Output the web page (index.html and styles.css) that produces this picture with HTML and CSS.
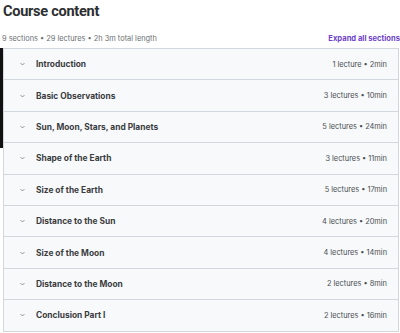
FILE: index.html
```html
<!DOCTYPE html>
<html>
<head>
    <meta charset="utf-8">
    <title>Course content</title>
    <link rel="stylesheet" href="styles.css">
</head>
<body>
    <h2 class="title">Course content</h2>
    <div class="summary">
        <span>9 sections • 29 lectures • 2h 3m total length</span>
        <button class="expand">Expand all sections</button>
    </div>

    <div class="popover"></div>

    <div class="sections">
        <div class="section">
            <svg class="chev" viewBox="0 0 10 6"><path d="M1 1l4 4 4-4"/></svg>
            <span class="name">Introduction</span>
            <span class="meta">1 lecture • 2min</span>
        </div>
        <div class="section">
            <svg class="chev" viewBox="0 0 10 6"><path d="M1 1l4 4 4-4"/></svg>
            <span class="name">Basic Observations</span>
            <span class="meta">3 lectures • 10min</span>
        </div>
        <div class="section">
            <svg class="chev" viewBox="0 0 10 6"><path d="M1 1l4 4 4-4"/></svg>
            <span class="name">Sun, Moon, Stars, and Planets</span>
            <span class="meta">5 lectures • 24min</span>
        </div>
        <div class="section">
            <svg class="chev" viewBox="0 0 10 6"><path d="M1 1l4 4 4-4"/></svg>
            <span class="name">Shape of the Earth</span>
            <span class="meta">3 lectures • 11min</span>
        </div>
        <div class="section">
            <svg class="chev" viewBox="0 0 10 6"><path d="M1 1l4 4 4-4"/></svg>
            <span class="name">Size of the Earth</span>
            <span class="meta">5 lectures • 17min</span>
        </div>
        <div class="section">
            <svg class="chev" viewBox="0 0 10 6"><path d="M1 1l4 4 4-4"/></svg>
            <span class="name">Distance to the Sun</span>
            <span class="meta">4 lectures • 20min</span>
        </div>
        <div class="section">
            <svg class="chev" viewBox="0 0 10 6"><path d="M1 1l4 4 4-4"/></svg>
            <span class="name">Size of the Moon</span>
            <span class="meta">4 lectures • 14min</span>
        </div>
        <div class="section">
            <svg class="chev" viewBox="0 0 10 6"><path d="M1 1l4 4 4-4"/></svg>
            <span class="name">Distance to the Moon</span>
            <span class="meta">2 lectures • 8min</span>
        </div>
        <div class="section">
            <svg class="chev" viewBox="0 0 10 6"><path d="M1 1l4 4 4-4"/></svg>
            <span class="name">Conclusion Part I</span>
            <span class="meta">2 lectures • 16min</span>
        </div>
    </div>
</body>
</html>
```

FILE: styles.css
```css
body {
    margin: 0;
    padding: 0 1px 0 3px;
    font-family: Inter, "Noto Sans", sans-serif;
    color: #2d2f31;
    background: #fff;
    overflow: hidden;
}
.title {
    margin: 0;
    padding-top: 1px;
    font-family: Roboto, "Liberation Sans", sans-serif;
    font-size: 14.6px;
    font-weight: 700;
    line-height: 20px;
    letter-spacing: -0.3px;
}
.summary {
    display: flex;
    justify-content: space-between;
    align-items: center;
    margin-top: 9px;
    margin-left: -1px;
    height: 17px;
    font-size: 7.4px;
    color: #6a6f73;
}
.expand {
    background: none;
    border: none;
    padding: 0;
    margin-right: -1px;
    font-family: inherit;
    font-size: 7.6px;
    font-weight: 700;
    color: #6d3fcb;
    cursor: pointer;
}
.popover {
    position: absolute;
    top: 48px;
    left: 0;
    width: 3px;
    height: 100px;
    background: #111;
}
.sections {
    border: 1px solid #d1d7dc;
    margin-top: 1px;
}
.section {
    display: flex;
    align-items: center;
    height: 30.4px;
    padding: 0 11px 0 16px;
    background: #f7f9fa;
    border-bottom: 1px solid #d1d7dc;
}
.section:last-child {
    border-bottom: none;
}
.chev {
    width: 5px;
    height: 4px;
    fill: none;
    stroke: #6a6f73;
    stroke-width: 1.4;
    margin-right: 11px;
}
.name {
    flex: 1;
    font-size: 8.4px;
    font-weight: 700;
    color: #3a3c3f;
}
.meta {
    font-size: 7.4px;
    color: #4a4e52;
}
```
